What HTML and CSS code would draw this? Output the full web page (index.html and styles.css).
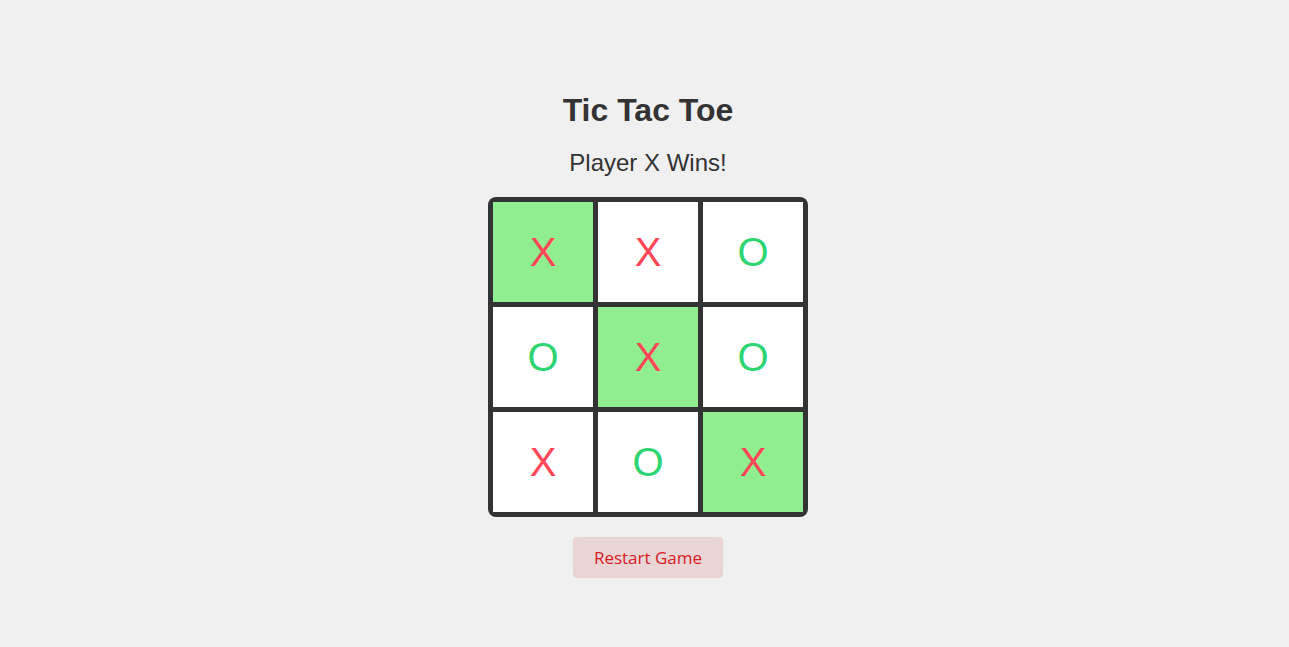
FILE: index.html
```html
<!DOCTYPE html>
<html>
<head>
<meta charset="utf-8">
<link rel="stylesheet" href="styles.css">
</head>
<body>
<div class="game">
  <h1 class="title">Tic Tac Toe</h1>
  <p class="status">Player X Wins!</p>
  <div class="board">
    <div class="cell win x">X</div>
    <div class="cell x">X</div>
    <div class="cell o">O</div>
    <div class="cell o">O</div>
    <div class="cell win x">X</div>
    <div class="cell o">O</div>
    <div class="cell x">X</div>
    <div class="cell o">O</div>
    <div class="cell win x">X</div>
  </div>
  <button class="restart">Restart Game</button>
</div>
</body>
</html>
```
FILE: styles.css
```css
html, body {
  margin: 0;
  padding: 0;
  background: #f0f0f0;
}
body {
  font-family: "Liberation Sans", Arial, sans-serif;
  color: #333;
}
.game {
  display: flex;
  flex-direction: column;
  align-items: center;
  gap: 20px;
  padding-top: 92px;
  padding-left: 7px;
}
.title {
  margin: 0;
  font-size: 32px;
  font-weight: bold;
  line-height: normal;
}
.status {
  margin: 0;
  font-size: 24px;
  line-height: normal;
}
.board {
  display: grid;
  grid-template-columns: repeat(3, 100px);
  grid-template-rows: repeat(3, 100px);
  gap: 5px;
  padding: 5px;
  background: #333;
  border-radius: 8px;
}
.cell {
  background: #fff;
  display: flex;
  align-items: center;
  justify-content: center;
  font-size: 40px;
}
.cell.win {
  background: #90ee90;
}
.cell.x { color: #ff4757; }
.cell.o { color: #2ed573; }
.restart {
  font-family: "Open Sans", sans-serif;
  font-size: 17px;
  color: #d61a26;
  background: #ead5d5;
  border: none;
  border-radius: 4px;
  width: 150px;
  height: 41px;
  padding: 0;
}
```
